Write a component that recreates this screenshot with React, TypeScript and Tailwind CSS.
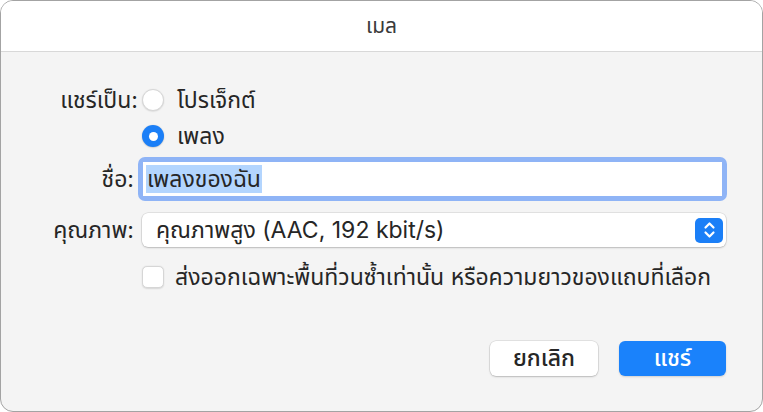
import React from 'react';

const FONT = { fontFamily: "Inter, 'Noto Sans Thai', 'Noto Sans', sans-serif" };

function Radio({ checked }: { checked?: boolean }) {
  if (checked) {
    return (
      <span className="flex h-[22px] w-[22px] items-center justify-center rounded-full bg-[#1b7ff7] shadow-[0_0.5px_1.5px_rgba(0,0,0,0.25)]">
        <span className="h-[9px] w-[9px] rounded-full bg-white" />
      </span>
    );
  }
  return (
    <span className="h-[22px] w-[22px] rounded-full border border-[#d6d6d6] bg-white shadow-[0_0.5px_1.5px_rgba(0,0,0,0.14)]" />
  );
}

export default function App() {
  return (
    <div className="h-[412px] w-[763px] bg-white text-[23px] text-[#262626]" style={FONT}>
      <div className="flex h-full w-full flex-col overflow-hidden rounded-[13px] border border-[#a3a3a3] bg-[#f4f4f4]">
        <div className="flex h-[51px] shrink-0 items-center justify-center border-b border-[#d8d8d8] bg-white text-[21px] text-[#3b3b3b]">
          เมล
        </div>

        <div className="mt-[34px] flex h-[28px] items-center">
          <div className="w-[137px] text-right">แชร์เป็น:</div>
          <div className="ml-[4px] flex items-center gap-[13px]">
            <Radio />
            <span>โปรเจ็กต์</span>
          </div>
        </div>

        <div className="mt-[8px] flex h-[28px] items-center">
          <div className="w-[137px]" />
          <div className="ml-[4px] flex items-center gap-[13px]">
            <Radio checked />
            <span>เพลง</span>
          </div>
        </div>

        <div className="mt-[7px] flex h-[44px] items-center">
          <div className="w-[133px] text-right">ชื่อ:</div>
          <div className="ml-[4px] h-full w-[589px] rounded-[7px] bg-[#8fb4f6] p-[5px]">
            <div className="flex h-full items-center bg-white pl-[3px]">
              <span className="bg-[#b3d5fe] px-[1px] leading-[28px]">เพลงของฉัน</span>
            </div>
          </div>
        </div>

        <div className="mt-[12px] flex h-[34px] items-center">
          <div className="w-[133px] text-right">คุณภาพ:</div>
          <div className="ml-[8px] flex h-full w-[584px] items-center justify-between rounded-[6px] bg-white pl-[14px] pr-[3px] shadow-[0_0_0_0.5px_rgba(0,0,0,0.14),0_1px_2px_rgba(0,0,0,0.18)]">
            <span>คุณภาพสูง (AAC, 192 kbit/s)</span>
            <span className="flex h-[25px] w-[28px] items-center justify-center rounded-[5px] bg-[#1b7ff7]">
              <svg width="13" height="18" viewBox="0 0 13 18" fill="none" stroke="white" strokeWidth="2.2" strokeLinecap="round" strokeLinejoin="round">
                <path d="M2.5 6.5 6.5 2.5 10.5 6.5" />
                <path d="M2.5 11.5 6.5 15.5 10.5 11.5" />
              </svg>
            </span>
          </div>
        </div>

        <div className="mt-[16px] flex h-[28px] items-center">
          <div className="w-[141px]" />
          <span className="h-[22px] w-[22px] rounded-[5px] border border-[#d6d6d6] bg-white shadow-[0_0.5px_1.5px_rgba(0,0,0,0.12)]" />
          <span className="ml-[11px]">ส่งออกเฉพาะพื้นที่วนซ้ำเท่านั้น หรือความยาวของแถบที่เลือก</span>
        </div>

        <div className="mt-[50px] flex justify-end gap-[21px] pr-[36px]">
          <button className="flex h-[35px] w-[108px] items-center justify-center rounded-[6px] bg-white font-medium text-[#262626] shadow-[0_0_0_0.5px_rgba(0,0,0,0.14),0_1px_2px_rgba(0,0,0,0.18)]">
            ยกเลิก
          </button>
          <button className="flex h-[35px] w-[107px] items-center justify-center rounded-[6px] bg-[#1a82fb] font-medium text-white shadow-[0_1px_2px_rgba(0,0,0,0.15)]">
            แชร์
          </button>
        </div>
      </div>
    </div>
  );
}
